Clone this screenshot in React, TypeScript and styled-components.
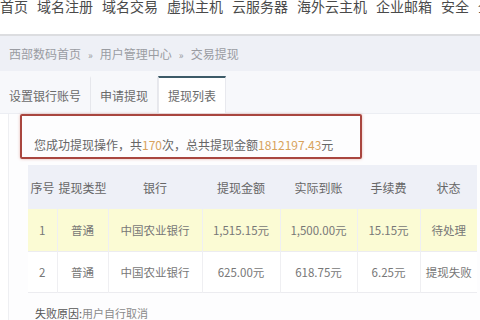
import styled, { createGlobalStyle } from 'styled-components';

const GlobalStyle = createGlobalStyle`
  html, body {
    margin: 0;
    padding: 0;
    background: #ffffff;
  }
  body {
    font-family: "Noto Sans CJK SC", "Noto Sans", sans-serif;
    width: 480px;
    height: 320px;
    overflow: hidden;
  }
`;

const TopNav = styled.nav`
  display: flex;
  gap: 9px;
  height: 34px;
  overflow: hidden;
  border-bottom: 2px solid #dcdde0;
  font-size: 14px;
  line-height: 12px;
  color: #4a4a4a;
  white-space: nowrap;
`;

const Crumbs = styled.div`
  height: 35px;
  padding-left: 9px;
  background: #eef0f6;
  font-size: 12px;
  line-height: 35px;
  color: #9a9ca2;
`;

const Sep = styled.span`
  margin: 0 7px;
  font-size: 10px;
`;

const TabBar = styled.div`
  display: flex;
  align-items: flex-end;
  height: 42px;
  background: #f7f8fb;
  border-bottom: 1px solid #eceef3;
`;

const Tab = styled.div<{ $active?: boolean }>`
  height: 35px;
  padding: 0 9px;
  font-size: 12px;
  line-height: 36px;
  color: #6a6a6a;
  border-top: 2px solid ${p => (p.$active ? '#3d5b68' : 'transparent')};
  border-left: ${p => (p.$active ? '1px solid #e8e9ee' : 'none')};
  border-right: 1px solid ${p => (p.$active ? '#e8e9ee' : '#e6e7ec')};
  background: ${p => (p.$active ? '#ffffff' : 'transparent')};
`;

const Panel = styled.section`
  margin-left: 8px;
  border-left: 1px solid #eeeff2;
  background: #fdfdfe;
  height: 210px;
  padding-left: 11px;
`;

const Notice = styled.div`
  width: 326px;
  padding: 20px 0 3px 12px;
  border: 2px solid #a9463f;
  border-radius: 2px;
  box-shadow: 0 0 3px rgba(200, 90, 70, 0.45);
  font-size: 12px;
  line-height: 18px;
  color: #666;
`;

const Hl = styled.span`
  color: #d8a35c;
`;

const Table = styled.table`
  margin: 6px 0 0 8px;
  width: 449px;
  border-collapse: collapse;
  table-layout: fixed;
  font-size: 11.5px;
  color: #777;
  text-align: center;
`;

const Th = styled.th`
  height: 44px;
  padding: 0;
  background: #eef0f7;
  font-weight: normal;
  font-size: 12px;
  color: #666;
`;

const Row = styled.tr<{ $hi?: boolean }>`
  background: ${p => (p.$hi ? '#fbfbd4' : '#ffffff')};
  border-bottom: 1px solid #ececf0;
`;

const Td = styled.td<{ $h: number }>`
  height: ${p => p.$h}px;
  padding: 0;
  border-left: 1px solid #efeff2;
  &:first-child {
    border-left: none;
  }
`;

const Reason = styled.div`
  margin: 12px 0 0 15px;
  font-size: 11px;
  line-height: 16px;
  color: #8a8a8a;
  b {
    font-weight: normal;
    color: #555;
  }
`;

const navItems = ['首页', '域名注册', '域名交易', '虚拟主机', '云服务器', '海外云主机', '企业邮箱', '安全', '全'];
const widths = [29, 51, 94, 78, 77, 63, 57];
const heads = ['序号', '提现类型', '银行', '提现金额', '实际到账', '手续费', '状态'];
const rows = [
  ['1', '普通', '中国农业银行', '1,515.15元', '1,500.00元', '15.15元', '待处理'],
  ['2', '普通', '中国农业银行', '625.00元', '618.75元', '6.25元', '提现失败'],
];

export default function App() {
  return (
    <>
      <GlobalStyle />
      <TopNav>
        {navItems.map(n => (
          <span key={n}>{n}</span>
        ))}
      </TopNav>
      <Crumbs>
        西部数码首页<Sep>»</Sep>用户管理中心<Sep>»</Sep>交易提现
      </Crumbs>
      <TabBar>
        <Tab>设置银行账号</Tab>
        <Tab>申请提现</Tab>
        <Tab $active>提现列表</Tab>
      </TabBar>
      <Panel>
        <Notice>
          您成功提现操作，共<Hl>170</Hl>次，总共提现金额<Hl>1812197.43</Hl>元
        </Notice>
        <Table>
          <colgroup>
            {widths.map((w, i) => (
              <col key={i} style={{ width: w }} />
            ))}
          </colgroup>
          <thead>
            <tr>
              {heads.map(h => (
                <Th key={h}>{h}</Th>
              ))}
            </tr>
          </thead>
          <tbody>
            {rows.map((r, i) => (
              <Row key={i} $hi={i === 0}>
                {r.map((c, j) => (
                  <Td key={j} $h={i === 0 ? 42 : 40}>
                    {c}
                  </Td>
                ))}
              </Row>
            ))}
          </tbody>
        </Table>
        <Reason>
          <b>失败原因:</b>用户自行取消
        </Reason>
      </Panel>
    </>
  );
}
